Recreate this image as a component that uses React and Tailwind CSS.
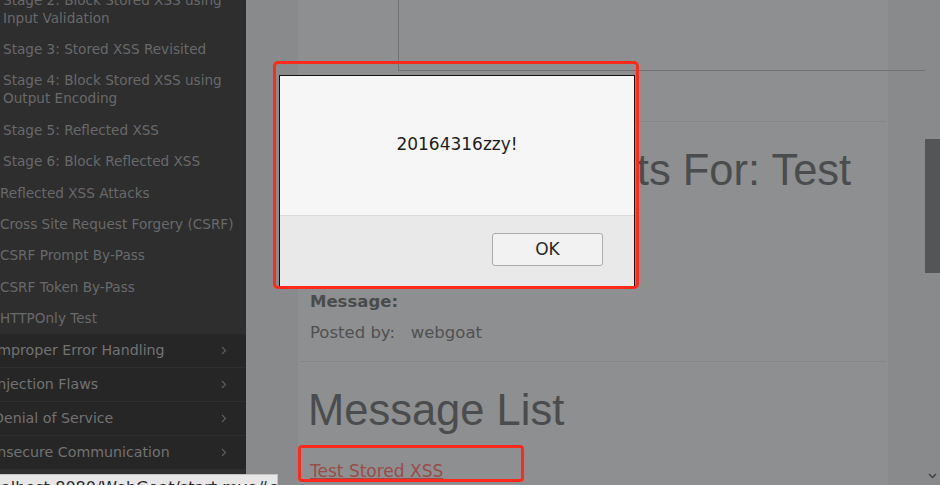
import React from "react";

const dejavu = { fontFamily: '"DejaVu Sans", sans-serif' };
const heading = { fontFamily: '"Liberation Sans", Arial, sans-serif' };

const lessons = [
  { lines: ["Stage 2: Block Stored XSS using", "Input Validation"], stage: true },
  { lines: ["Stage 3: Stored XSS Revisited"], stage: true },
  { lines: ["Stage 4: Block Stored XSS using", "Output Encoding"], stage: true },
  { lines: ["Stage 5: Reflected XSS"], stage: true },
  { lines: ["Stage 6: Block Reflected XSS"], stage: true },
  { lines: ["Reflected XSS Attacks"] },
  { lines: ["Cross Site Request Forgery (CSRF)"] },
  { lines: ["CSRF Prompt By-Pass"] },
  { lines: ["CSRF Token By-Pass"] },
  { lines: ["HTTPOnly Test"] },
];

const categories = [
  "Improper Error Handling",
  "Injection Flaws",
  "Denial of Service",
  "Insecure Communication",
];

const Chevron = () => (
  <svg width="6" height="9" viewBox="0 0 6 9" className="shrink-0">
    <polyline points="1,1 4.5,4.5 1,8" fill="none" stroke="#5d5d5d" strokeWidth="1.2" />
  </svg>
);

export default function App() {
  return (
    <div className="relative flex h-[485px] w-[940px] overflow-hidden bg-[#898a8b]" style={dejavu}>
      {/* menu */}
      <div className="w-[246px] shrink-0 overflow-hidden bg-[#2e2e2f]">
        <div className="-ml-[21px] -mt-[16px]">
          {lessons.map((l, i) => (
            <div
              key={i}
              className={`whitespace-nowrap py-[6.7px] text-[13.6px] leading-[18px] text-[#68696a] ${
                l.stage ? "pl-[24px]" : "pl-[21px]"
              }`}
            >
              {l.lines.map((t, j) => (
                <div key={j}>{t}</div>
              ))}
            </div>
          ))}
          <div className="bg-[#262627]">
            {categories.map((c) => (
              <div
                key={c}
                className="flex h-[34px] items-center justify-between border-b border-[#2e2e2f] pl-[14px] pr-[19px] text-[14.2px] text-[#727272] whitespace-nowrap"
              >
                <span>{c}</span>
                <Chevron />
              </div>
            ))}
          </div>
        </div>
      </div>

      {/* main */}
      <div className="flex flex-1">
        <div className="w-[52px] shrink-0" />
        <div className="flex w-[590px] shrink-0 flex-col bg-[#8e8f90]">
          <div className="h-[71px]">
            <div className="ml-[100px] h-[71px] w-[527px] border-b border-l border-[#707172]" />
          </div>
          <div className="mx-[2px] mt-[50px] border-t border-[#848586]" />
          <h1
            className="ml-[10px] mt-[24px] whitespace-nowrap text-[43.5px] leading-[48px] text-[#4b4c4d]"
            style={heading}
          >
            Message Contents For: Test
          </h1>
          <div className="ml-[12px] mt-[97px] text-[16.5px] leading-[22px]">
            <div className="font-bold text-[#4a4b4c]">Message:</div>
            <div className="mt-[9px] text-[#505152]">Posted by:&nbsp;&nbsp; webgoat</div>
          </div>
          <div className="mx-[2px] mt-[17px] border-t border-[#848586]" />
          <h2
            className="ml-[10px] mt-[24px] whitespace-nowrap text-[43.5px] leading-[48px] text-[#4b4c4d]"
            style={heading}
          >
            Message List
          </h2>
          <div className="ml-[12px] mt-[26px] text-[17px] leading-[22px]">
            <a className="text-[#984d49] underline">Test Stored XSS</a>
          </div>
        </div>
        <div className="flex-1" />
        <div className="flex w-[15px] shrink-0 flex-col items-center">
          <div className="mt-[139px] h-[134px] w-[15px] bg-[#545556]" />
          <div className="flex-1" />
          <svg width="9" height="6" viewBox="0 0 9 6" className="mb-[6px]">
            <polyline points="1,1 4.5,4.5 8,1" fill="none" stroke="#3f4041" strokeWidth="1.5" />
          </svg>
        </div>
      </div>

      {/* alert dialog */}
      <div className="absolute left-[279px] top-[75px] flex h-[212px] w-[356px] flex-col border border-[#111] bg-[#f6f6f6]">
        <div className="flex h-[139px] items-center justify-center pb-[2px] text-[17px] text-[#1e1e1e]">
          20164316zzy!
        </div>
        <div className="flex flex-1 items-start justify-end border-t border-[#dadada] bg-[#e9e9e9] pr-[31px] pt-[17px]">
          <button className="h-[33px] w-[111px] rounded-[3px] border border-[#ababab] bg-[#f2f2f2] text-[17px] text-[#2a2a2a]">
            OK
          </button>
        </div>
      </div>

      {/* annotations */}
      <div className="absolute left-[273px] top-[61px] h-[228px] w-[366px] rounded-[5px] border-[3px] border-[#ff2a1c]" />
      <div className="absolute left-[298px] top-[445px] h-[37px] w-[226px] rounded-[4px] border-[3px] border-[#ff2a1c]" />

      {/* status bar */}
      <div className="absolute bottom-0 left-0 h-[11px] w-[278px] overflow-hidden border-r border-t border-[#c4c4c4] bg-[#e7e7e7]">
        <div className="-ml-[22px] whitespace-nowrap pt-[5px] text-[16px] leading-[16px] text-[#2c2c2c]">
          localhost:8080/WebGoat/start.mvc#attack/
        </div>
      </div>
    </div>
  );
}
